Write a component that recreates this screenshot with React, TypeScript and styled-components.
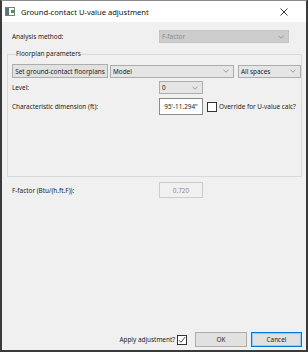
import React from 'react';
import styled, { createGlobalStyle } from 'styled-components';

const Global = createGlobalStyle`
  html, body { margin: 0; padding: 0; background: #ffffff; }
  body { font-family: "Noto Sans", "Liberation Sans", sans-serif; }
  * { box-sizing: border-box; }
`;

const Window = styled.div`
  width: 308px;
  height: 352px;
  border: 2px solid #3a3a3a;
  border-top: 1px solid #8a8a8a;
  background: #f0f0f0;
  display: flex;
  flex-direction: column;
  font-size: 6.4px;
  color: #222222;
`;

const TitleBar = styled.div`
  height: 21px;
  flex: none;
  background: #ffffff;
  display: flex;
  align-items: center;
  padding: 0 0 0 3px;
`;

const TitleText = styled.span`
  font-size: 7.6px;
  color: #111;
  margin-left: 6px;
  flex: 1;
`;

const CloseBox = styled.div`
  width: 28px;
  display: flex;
  justify-content: center;
  align-items: center;
  margin-right: 8px;
`;

const Body = styled.div`
  flex: 1;
  display: flex;
  flex-direction: column;
  padding: 0 4px 3px 5px;
`;

const FormRow = styled.div<{ $top: number; $h: number }>`
  display: grid;
  grid-template-columns: 147px auto 1fr;
  align-items: center;
  margin-top: ${(p) => p.$top}px;
  height: ${(p) => p.$h}px;
  padding-left: 5px;
`;

const Label = styled.span`
  white-space: nowrap;
`;

const SelectBox = styled.div<{ $w: number; $disabled?: boolean }>`
  width: ${(p) => p.$w}px;
  height: 13px;
  display: flex;
  align-items: center;
  justify-content: space-between;
  padding: 0 4px 0 2px;
  background: ${(p) => (p.$disabled ? '#cccccc' : '#e5e5e5')};
  border: 1px solid ${(p) => (p.$disabled ? '#c4c4c4' : '#adadad')};
  color: ${(p) => (p.$disabled ? '#8a8a8a' : '#222222')};
  white-space: nowrap;
`;

const TextField = styled.div<{ $disabled?: boolean }>`
  width: 44px;
  height: ${(p) => (p.$disabled ? 16 : 17)}px;
  display: flex;
  align-items: center;
  justify-content: center;
  background: ${(p) => (p.$disabled ? '#f0f0f0' : '#ffffff')};
  border: 1px solid ${(p) => (p.$disabled ? '#cccccc' : '#8a8a8a')};
  color: ${(p) => (p.$disabled ? '#8d8d8d' : '#222222')};
  white-space: nowrap;
`;

const CheckWrap = styled.label`
  display: flex;
  align-items: center;
  gap: 2px;
  margin-left: 4px;
  white-space: nowrap;
`;

const CheckSquare = styled.span`
  width: 10px;
  height: 10px;
  background: #ffffff;
  border: 1px solid #333333;
  display: flex;
  align-items: center;
  justify-content: center;
  flex: none;
`;

const Group = styled.fieldset`
  margin: 6px 0 0 0;
  padding: 5px 0 61px 4px;
  border: 1px solid #d9d9d9;
  min-width: 0;
`;

const Legend = styled.legend`
  padding: 0;
  margin-left: 4px;
  line-height: 10px;
`;

const ButtonRow = styled.div`
  display: flex;
  align-items: center;
  height: 14px;
`;

const Button = styled.div<{ $w: number; $default?: boolean; $h?: number }>`
  width: ${(p) => p.$w}px;
  height: ${(p) => p.$h ?? 14}px;
  display: flex;
  align-items: center;
  justify-content: center;
  background: #e1e1e1;
  border: 1px solid ${(p) => (p.$default ? '#0078d7' : '#adadad')};
  box-shadow: ${(p) => (p.$default ? 'inset 0 0 0 1px #9cc8ee' : 'none')};
  white-space: nowrap;
  flex: none;
`;

const Spacer = styled.span<{ $w: number }>`
  width: ${(p) => p.$w}px;
  flex: none;
`;

const GroupRow = styled.div<{ $top: number; $h: number }>`
  display: grid;
  grid-template-columns: 147px auto 1fr;
  align-items: center;
  margin-top: ${(p) => p.$top}px;
  height: ${(p) => p.$h}px;
`;

const Footer = styled.div`
  margin-top: auto;
  display: flex;
  align-items: center;
  justify-content: flex-end;
  height: 15px;
`;

const FooterCheck = styled.label`
  display: flex;
  align-items: center;
  gap: 2px;
  margin-right: 8px;
  white-space: nowrap;
`;

const Chevron = () => (
  <svg width="6" height="4" viewBox="0 0 6 4">
    <path d="M0.5 0.8 L3 3.2 L5.5 0.8" fill="none" stroke="#8a8a8a" strokeWidth="0.8" />
  </svg>
);

const Select = ({ w, value, disabled }: { w: number; value: string; disabled?: boolean }) => (
  <SelectBox $w={w} $disabled={disabled}>
    <span>{value}</span>
    <Chevron />
  </SelectBox>
);

const Tick = () => (
  <svg width="8" height="8" viewBox="0 0 8 8">
    <path d="M1 4.2 L3 6.3 L7 1.2" fill="none" stroke="#333" strokeWidth="0.9" />
  </svg>
);

const AppIcon = () => (
  <svg width="10" height="9" viewBox="0 0 10 9">
    <rect x="0.5" y="0.5" width="9" height="8" fill="#ffffff" stroke="#7a7a7a" />
    <rect x="1" y="1" width="3" height="7" fill="#5a7676" />
    <rect x="6" y="3" width="3" height="3" fill="#3aa04a" />
  </svg>
);

export default function App() {
  return (
    <>
      <Global />
      <Window>
        <TitleBar>
          <AppIcon />
          <TitleText>Ground-contact U-value adjustment</TitleText>
          <CloseBox>
            <svg width="8" height="8" viewBox="0 0 8 8">
              <path d="M0.5 0.5 L7.5 7.5 M7.5 0.5 L0.5 7.5" stroke="#222" strokeWidth="0.9" />
            </svg>
          </CloseBox>
        </TitleBar>
        <Body>
          <FormRow $top={8} $h={13}>
            <Label>Analysis method:</Label>
            <Select w={130} value="F-factor" disabled />
          </FormRow>
          <Group>
            <Legend>Floorplan parameters</Legend>
            <ButtonRow>
              <Button $w={96}>Set ground-contact floorplans</Button>
              <Spacer $w={2} />
              <Select w={124} value="Model" />
              <Spacer $w={4} />
              <Select w={63} value="All spaces" />
            </ButtonRow>
            <GroupRow $top={3} $h={13}>
              <Label>Level:</Label>
              <Select w={44} value="0" />
            </GroupRow>
            <GroupRow $top={4} $h={17}>
              <Label>Characteristic dimension (ft):</Label>
              <TextField>95'-11.294"</TextField>
              <CheckWrap>
                <CheckSquare />
                <span>Override for U-value calc?</span>
              </CheckWrap>
            </GroupRow>
          </Group>
          <FormRow $top={5} $h={16}>
            <Label>F-factor (Btu/(h.ft.F)):</Label>
            <TextField $disabled>0.720</TextField>
          </FormRow>
          <Footer>
            <FooterCheck>
              <span>Apply adjustment?</span>
              <CheckSquare>
                <Tick />
              </CheckSquare>
            </FooterCheck>
            <Button $w={52} $h={15}>OK</Button>
            <Spacer $w={4} />
            <Button $w={51} $h={15} $default>Cancel</Button>
          </Footer>
        </Body>
      </Window>
    </>
  );
}
